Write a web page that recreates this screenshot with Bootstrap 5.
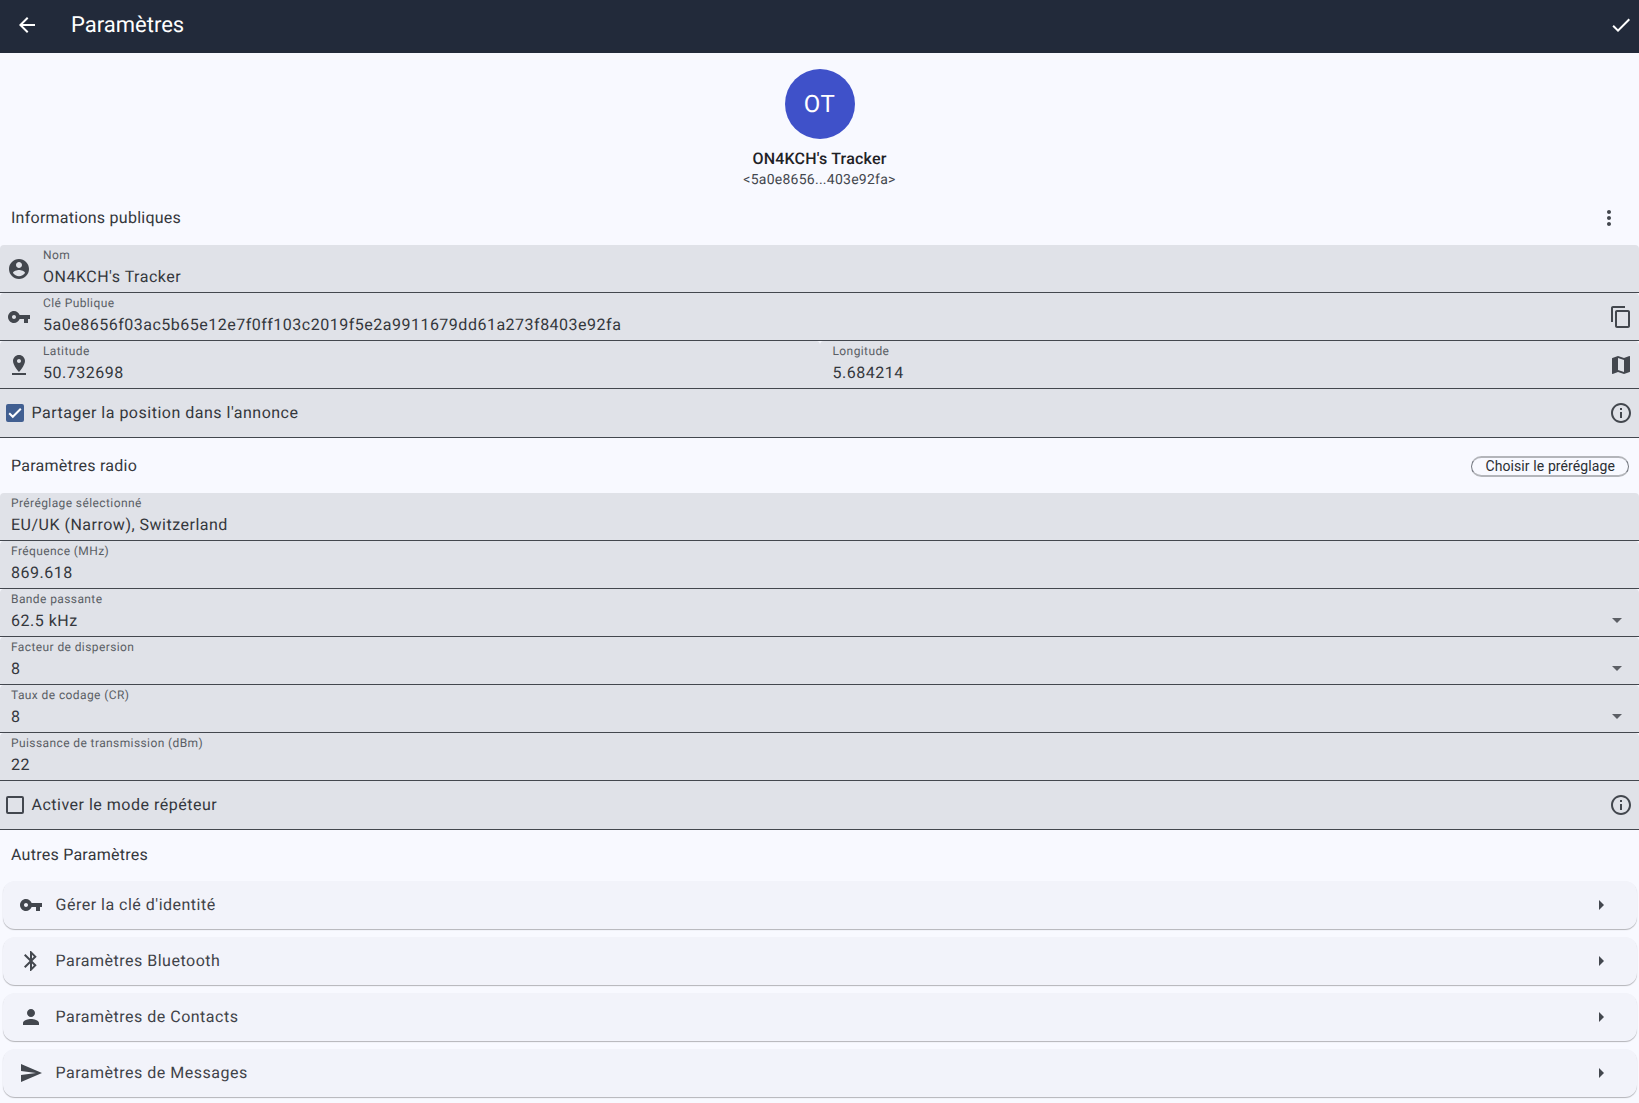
<!DOCTYPE html>
<html lang="fr">
<head>
<meta charset="utf-8">
<title>Paramètres</title>
<link rel="stylesheet" href="https://cdn.jsdelivr.net/npm/bootstrap@5.3.0/dist/css/bootstrap.min.css">
<style>
html,body{height:100%;overflow:hidden}
body{background:#f8f9ff;font-family:Roboto,"Liberation Sans",sans-serif;color:#34373c;font-size:16px;text-rendering:geometricPrecision}
svg{fill:#43474e;flex:none;display:block}
.appbar{height:53px;background:#222a3a;color:#fff;padding:0 6px 0 15px}
.appbar svg{fill:#fff;margin-top:-3px}
.app-title{font-size:22px;line-height:28px;margin-left:32px;margin-top:-2px}
.profile{padding-top:16px}
.avatar{width:70px;height:70px;background:#3f51c9;color:#fff;font-size:24px;letter-spacing:.4px}
.p-name{font-size:16px;font-weight:500;line-height:20px;margin-top:10px;letter-spacing:.2px;color:#1f2226}
.p-id{font-size:14px;line-height:18px;color:#43474e;margin-top:2px;letter-spacing:.25px}
.sec-head{padding:0 6px 0 11px;letter-spacing:.25px}
.h-info{height:56px;padding-top:2px}
.h-radio{height:55px}
.h-other{height:51px;padding-bottom:2px}
.h-info svg{margin-right:12px}
.fld{height:48px;background:#e0e2e8;border-bottom:1px solid #43474e;border-radius:4px 4px 0 0;min-width:0}
.fld-body{min-width:0;padding-top:4px}
.f-label{font-size:12px;line-height:12px;letter-spacing:.4px;color:#5a5e65}
.f-value{font-size:16px;line-height:20px;letter-spacing:.5px;margin-top:6px;white-space:nowrap}
.pl-icon{padding-left:7px}
.pl-icon .fld-body{margin-left:12px}
.pl-plain{padding-left:11px}
.pr-icon{padding-right:6px}
.half{width:50%}
.half-r{padding-left:13px}
.drop{margin-right:10px;margin-top:14px}
.drop path{fill:#5c5f65}
.chk-row{height:49px;padding:0 6px;background:#e0e2e8;border-bottom:1px solid #43474e}
.chk-row .form-check-input{width:18px;height:18px;margin:0;border:2px solid #43474e;border-radius:2px;background-color:transparent;flex:none}
.chk-row .form-check-input:checked{background-color:#415f91;border-color:#415f91;background-image:url("data:image/svg+xml,%3csvg xmlns='http://www.w3.org/2000/svg' viewBox='0 0 14 14'%3e%3cpath fill='none' stroke='%23fff' stroke-width='2' d='M1.2 7.2l3.6 3.6 8-8'/%3e%3c/svg%3e");background-size:14px 14px;background-position:center}
.chk-label{font-size:16px;letter-spacing:.5px;margin-left:7.5px}
.btn-preset{height:21px;padding:0 13px;font-size:14px;line-height:17px;letter-spacing:.1px;color:#2b2e33;border:1px solid #73777f;border-top:2px solid #b3b5ba;border-bottom:2px solid #b3b5ba;border-radius:11px;background:transparent;margin:1px 4px 0 0}
.menu-list{padding:0 2px 0 3px}
.menu-card{height:48px;background:#f2f3fa;border:0;border-radius:12px;box-shadow:0 1px 1px rgba(0,0,0,.28);margin-bottom:8px;padding:0 24px 0 16px;flex-direction:row}
.menu-card .m-text{margin-left:12.5px;font-size:16px;letter-spacing:.5px;color:#3f4248}
</style>
</head>
<body>
<header class="appbar d-flex align-items-center">
  <svg width="24" height="24" viewBox="0 0 24 24"><path d="M20 11H7.83l5.59-5.59L12 4l-8 8 8 8 1.41-1.41L7.83 13H20v-2z"/></svg>
  <div class="app-title flex-grow-1">Paramètres</div>
  <svg width="24" height="24" viewBox="0 0 24 24"><path d="M9 16.17L4.83 12l-1.42 1.41L9 19 21 7l-1.41-1.41z"/></svg>
</header>

<main>
  <section class="profile d-flex flex-column align-items-center">
    <div class="avatar rounded-circle d-flex align-items-center justify-content-center">OT</div>
    <div class="p-name">ON4KCH's Tracker</div>
    <div class="p-id">&lt;5a0e8656...403e92fa&gt;</div>
  </section>

  <div class="sec-head h-info d-flex align-items-center justify-content-between">
    <span>Informations publiques</span>
    <svg width="24" height="24" viewBox="0 0 24 24"><path d="M12 8c1.1 0 2-.9 2-2s-.9-2-2-2-2 .9-2 2 .9 2 2 2zm0 2c-1.1 0-2 .9-2 2s.9 2 2 2 2-.9 2-2-.9-2-2-2zm0 6c-1.1 0-2 .9-2 2s.9 2 2 2 2-.9 2-2-.9-2-2-2z"/></svg>
  </div>

  <div class="fld pl-icon pr-icon d-flex align-items-center">
    <svg width="24" height="24" viewBox="0 0 24 24"><path d="M12 2C6.48 2 2 6.48 2 12s4.48 10 10 10 10-4.48 10-10S17.52 2 12 2zm0 3c1.66 0 3 1.34 3 3s-1.34 3-3 3-3-1.34-3-3 1.34-3 3-3zm0 14.2c-2.5 0-4.71-1.28-6-3.22.03-1.99 4-3.08 6-3.08 1.99 0 5.97 1.09 6 3.08-1.29 1.94-3.5 3.22-6 3.22z"/></svg>
    <div class="fld-body flex-grow-1 align-self-start"><div class="f-label">Nom</div><div class="f-value">ON4KCH's Tracker</div></div>
  </div>
  <div class="fld pl-icon pr-icon d-flex align-items-center">
    <svg width="24" height="24" viewBox="0 0 24 24"><path d="M12.65 10C11.83 7.67 9.61 6 7 6c-3.31 0-6 2.69-6 6s2.69 6 6 6c2.61 0 4.83-1.67 5.65-4H17v4h4v-4h2v-4H12.65zM7 14c-1.1 0-2-.9-2-2s.9-2 2-2 2 .9 2 2-.9 2-2 2z"/></svg>
    <div class="fld-body flex-grow-1 align-self-start"><div class="f-label">Clé Publique</div><div class="f-value">5a0e8656f03ac5b65e12e7f0ff103c2019f5e2a9911679dd61a273f8403e92fa</div></div>
    <svg width="24" height="24" viewBox="0 0 24 24"><path d="M16 1H4c-1.1 0-2 .9-2 2v14h2V3h12V1zm3 4H8c-1.1 0-2 .9-2 2v14c0 1.1.9 2 2 2h11c1.1 0 2-.9 2-2V7c0-1.1-.9-2-2-2zm0 16H8V7h11v14z"/></svg>
  </div>
  <div class="d-flex">
    <div class="fld half pl-icon d-flex align-items-center">
      <svg width="24" height="24" viewBox="0 0 24 24"><path d="M18 8c0-3.31-2.69-6-6-6S6 4.69 6 8c0 4.5 6 11 6 11s6-6.5 6-11zm-8 0c0-1.1.9-2 2-2s2 .9 2 2-.89 2-2 2c-1.1 0-2-.9-2-2zM5 20v2h14v-2H5z"/></svg>
      <div class="fld-body flex-grow-1 align-self-start"><div class="f-label">Latitude</div><div class="f-value">50.732698</div></div>
    </div>
    <div class="fld half half-r pr-icon d-flex align-items-center">
      <div class="fld-body flex-grow-1 align-self-start"><div class="f-label">Longitude</div><div class="f-value">5.684214</div></div>
      <svg width="24" height="24" viewBox="0 0 24 24"><path d="M20.5 3l-.16.03L15 5.1 9 3 3.36 4.9c-.21.07-.36.25-.36.48V20.5c0 .28.22.5.5.5l.16-.03L9 18.9l6 2.1 5.64-1.9c.21-.07.36-.25.36-.48V3.5c0-.28-.22-.5-.5-.5zM15 19l-6-2.11V5l6 2.11V19z"/></svg>
    </div>
  </div>
  <div class="chk-row d-flex align-items-center">
    <input class="form-check-input" type="checkbox" checked aria-label="Partager la position dans l'annonce">
    <span class="chk-label flex-grow-1">Partager la position dans l'annonce</span>
    <svg width="24" height="24" viewBox="0 0 24 24"><path d="M11 7h2v2h-2zm0 4h2v6h-2zm1-9C6.48 2 2 6.48 2 12s4.48 10 10 10 10-4.48 10-10S17.52 2 12 2zm0 18c-4.41 0-8-3.59-8-8s3.59-8 8-8 8 3.59 8 8-3.59 8-8 8z"/></svg>
  </div>

  <div class="sec-head h-radio d-flex align-items-center justify-content-between">
    <span>Paramètres radio</span>
    <button type="button" class="btn btn-preset">Choisir le préréglage</button>
  </div>

  <div class="fld pl-plain d-flex"><div class="fld-body flex-grow-1"><div class="f-label">Préréglage sélectionné</div><div class="f-value">EU/UK (Narrow), Switzerland</div></div></div>
  <div class="fld pl-plain d-flex"><div class="fld-body flex-grow-1"><div class="f-label">Fréquence (MHz)</div><div class="f-value">869.618</div></div></div>
  <div class="fld pl-plain d-flex align-items-center"><div class="fld-body flex-grow-1 align-self-start"><div class="f-label">Bande passante</div><div class="f-value">62.5 kHz</div></div><svg class="drop" width="24" height="24" viewBox="0 0 24 24"><path d="M7 10l5 5 5-5z"/></svg></div>
  <div class="fld pl-plain d-flex align-items-center"><div class="fld-body flex-grow-1 align-self-start"><div class="f-label">Facteur de dispersion</div><div class="f-value">8</div></div><svg class="drop" width="24" height="24" viewBox="0 0 24 24"><path d="M7 10l5 5 5-5z"/></svg></div>
  <div class="fld pl-plain d-flex align-items-center"><div class="fld-body flex-grow-1 align-self-start"><div class="f-label">Taux de codage (CR)</div><div class="f-value">8</div></div><svg class="drop" width="24" height="24" viewBox="0 0 24 24"><path d="M7 10l5 5 5-5z"/></svg></div>
  <div class="fld pl-plain d-flex"><div class="fld-body flex-grow-1"><div class="f-label">Puissance de transmission (dBm)</div><div class="f-value">22</div></div></div>
  <div class="chk-row d-flex align-items-center">
    <input class="form-check-input" type="checkbox" aria-label="Activer le mode répéteur">
    <span class="chk-label flex-grow-1">Activer le mode répéteur</span>
    <svg width="24" height="24" viewBox="0 0 24 24"><path d="M11 7h2v2h-2zm0 4h2v6h-2zm1-9C6.48 2 2 6.48 2 12s4.48 10 10 10 10-4.48 10-10S17.52 2 12 2zm0 18c-4.41 0-8-3.59-8-8s3.59-8 8-8 8 3.59 8 8-3.59 8-8 8z"/></svg>
  </div>

  <div class="sec-head h-other d-flex align-items-center"><span>Autres Paramètres</span></div>

  <div class="menu-list">
    <div class="card menu-card d-flex align-items-center">
      <svg width="24" height="24" viewBox="0 0 24 24"><path d="M12.65 10C11.83 7.67 9.61 6 7 6c-3.31 0-6 2.69-6 6s2.69 6 6 6c2.61 0 4.83-1.67 5.65-4H17v4h4v-4h2v-4H12.65zM7 14c-1.1 0-2-.9-2-2s.9-2 2-2 2 .9 2 2-.9 2-2 2z"/></svg>
      <span class="m-text flex-grow-1">Gérer la clé d'identité</span>
      <svg width="24" height="24" viewBox="0 0 24 24"><path d="M10 17l5-5-5-5v10z"/></svg>
    </div>
    <div class="card menu-card d-flex align-items-center">
      <svg width="24" height="24" viewBox="0 0 24 24"><path d="M17.71 7.71L12 2h-1v7.59L6.41 5 5 6.41 10.59 12 5 17.59 6.41 19 11 14.41V22h1l5.71-5.71-4.3-4.29 4.3-4.29zM13 5.83l1.88 1.88L13 9.59V5.83zm1.88 10.46L13 18.17v-3.76l1.88 1.88z"/></svg>
      <span class="m-text flex-grow-1">Paramètres Bluetooth</span>
      <svg width="24" height="24" viewBox="0 0 24 24"><path d="M10 17l5-5-5-5v10z"/></svg>
    </div>
    <div class="card menu-card d-flex align-items-center">
      <svg width="24" height="24" viewBox="0 0 24 24"><path d="M12 12c2.21 0 4-1.79 4-4s-1.79-4-4-4-4 1.79-4 4 1.79 4 4 4zm0 2c-2.67 0-8 1.34-8 4v2h16v-2c0-2.66-5.33-4-8-4z"/></svg>
      <span class="m-text flex-grow-1">Paramètres de Contacts</span>
      <svg width="24" height="24" viewBox="0 0 24 24"><path d="M10 17l5-5-5-5v10z"/></svg>
    </div>
    <div class="card menu-card d-flex align-items-center">
      <svg width="24" height="24" viewBox="0 0 24 24"><path d="M2.01 21L23 12 2.01 3 2 10l15 2-15 2z"/></svg>
      <span class="m-text flex-grow-1">Paramètres de Messages</span>
      <svg width="24" height="24" viewBox="0 0 24 24"><path d="M10 17l5-5-5-5v10z"/></svg>
    </div>
  </div>
</main>
<script src="https://cdn.jsdelivr.net/npm/bootstrap@5.3.0/dist/js/bootstrap.bundle.min.js"></script>
</body>
</html>
